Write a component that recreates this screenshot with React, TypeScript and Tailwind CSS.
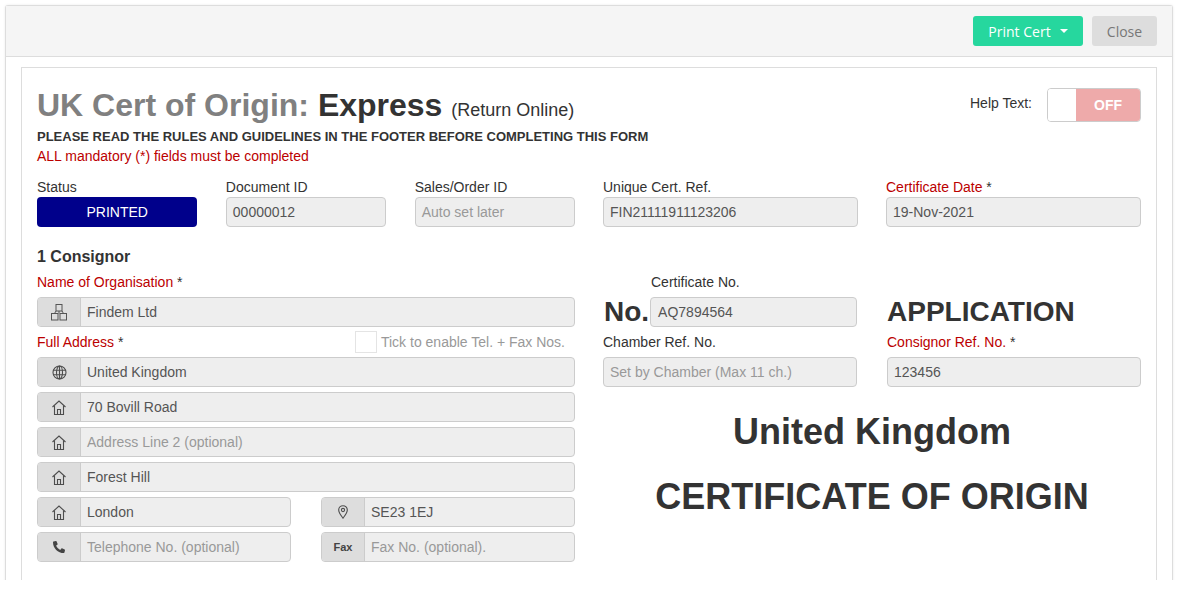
import { FaPhoneAlt } from 'react-icons/fa';
import { ReactNode } from 'react';

const red = 'text-[#bb0000]';

function NetworkIcon() {
  return (
    <svg width="16" height="17" viewBox="0 0 16 17" fill="none" stroke="#555" strokeWidth="1">
      <rect x="5" y="0.5" width="6" height="6.5" />
      <path d="M8 7v2.5M5 7L3.5 9.5M11 7l1.5 2.5" />
      <rect x="0.5" y="9.5" width="6.5" height="6.5" />
      <rect x="9" y="9.5" width="6.5" height="6.5" />
    </svg>
  );
}

function GlobeIcon() {
  return (
    <svg width="15" height="15" viewBox="0 0 15 15" fill="none" stroke="#4d4d4d" strokeWidth="1.1">
      <circle cx="7.5" cy="7.5" r="6.5" />
      <ellipse cx="7.5" cy="7.5" rx="3" ry="6.5" />
      <path d="M1 5.2h13M1 9.8h13M7.5 1v13" />
    </svg>
  );
}

function HouseIcon() {
  return (
    <svg width="14" height="15" viewBox="0 0 14 15" fill="none" stroke="#4d4d4d" strokeWidth="1.1">
      <path d="M0.5 7L7 1l6.5 6" />
      <path d="M2.5 5.5v9h9v-9" />
      <path d="M5.5 14.5V9.5h3v5" />
    </svg>
  );
}

function PinIcon() {
  return (
    <svg width="10" height="14" viewBox="0 0 10 14" fill="none" stroke="#4d4d4d" strokeWidth="1.1">
      <path d="M5 13.2C3 10.5 0.7 7.8 0.7 5a4.3 4.3 0 0 1 8.6 0c0 2.8-2.3 5.5-4.3 8.2z" />
      <circle cx="5" cy="5" r="1.6" />
    </svg>
  );
}

function Label({ children, mandatory }: { children: ReactNode; mandatory?: boolean }) {
  return (
    <div className="h-5 leading-5 text-[14px]">
      <span className={mandatory ? red : ''}>{children}</span>
      {mandatory && ' *'}
    </div>
  );
}

function Field({ value, placeholder, className = '' }: { value?: string; placeholder?: string; className?: string }) {
  return (
    <div
      className={`h-[30px] px-[6px] flex items-center bg-[#eeeeee] border border-[#cccccc] rounded-[4px] text-[14px] ${
        value ? 'text-[#555555]' : 'text-[#999999]'
      } ${className}`}
    >
      {value ?? placeholder}
    </div>
  );
}

function IconField({ icon, value, placeholder }: { icon: ReactNode; value?: string; placeholder?: string }) {
  return (
    <div className="flex h-[30px] bg-[#eeeeee] border border-[#cccccc] rounded-[4px] text-[14px]">
      <div className="w-[43px] shrink-0 flex items-center justify-center bg-[#dddddd] border-r border-[#cccccc] rounded-l-[3px]">
        {icon}
      </div>
      <div className={`px-[6px] flex items-center ${value ? 'text-[#555555]' : 'text-[#999999]'}`}>
        {value ?? placeholder}
      </div>
    </div>
  );
}

export default function App() {
  return (
    <div className="h-[580px] overflow-hidden bg-white pt-[5px] pl-[5px] pr-[4px] text-[#333333] font-['Liberation_Sans',Arial,sans-serif]">
      <div className="border border-b-0 border-[#dddddd] rounded-t-[3px] h-[600px] shadow-[0_0_3px_rgba(0,0,0,0.08)]">
        <div className="h-[51px] bg-[#f5f5f5] border-b border-[#dddddd] flex items-center justify-end gap-[9px] pr-[15px]">
          <button className="h-[30px] w-[110px] flex items-center justify-center gap-[9px] rounded-[3px] bg-[#26d79e] text-white text-[14px] font-['Open_Sans',sans-serif]">
            Print Cert
            <span className="border-x-[4px] border-x-transparent border-t-[4px] border-t-white" />
          </button>
          <button className="h-[30px] w-[65px] rounded-[3px] bg-[#dddddd] text-[#777777] text-[14px] font-['Open_Sans',sans-serif]">
            Close
          </button>
        </div>

        <div className="mt-[10px] mx-[15px] border border-[#dddddd] px-[15px] pt-[20px] h-[600px]">
          <div className="flex justify-between items-start h-[35px]">
            <div className="whitespace-nowrap leading-[35px]">
              <span className="text-[32px] font-bold text-[#808080]">UK Cert of Origin: </span>
              <span className="text-[32px] font-bold">Express </span>
              <span className="text-[18px]">(Return Online)</span>
            </div>
            <div className="flex items-start gap-[15px]">
              <span className="text-[14px] leading-5 mt-[5px]">Help Text:</span>
              <div className="flex w-[94px] h-[34px] border border-[#cccccc] rounded-[4px] overflow-hidden">
                <div className="w-[28px] bg-white" />
                <div className="flex-1 bg-[#eeaaaa] text-white text-[14px] font-bold flex items-center justify-center">
                  OFF
                </div>
              </div>
            </div>
          </div>

          <div className="mt-[4px] h-5 leading-5 text-[13px] font-bold whitespace-nowrap">
            PLEASE READ THE RULES AND GUIDELINES IN THE FOOTER BEFORE COMPLETING THIS FORM
          </div>
          <div className={`-mt-[1px] h-5 leading-5 text-[14px] ${red}`}>ALL mandatory (*) fields must be completed</div>

          <div className="mt-[11px] grid grid-cols-2 gap-x-[28px]">
            <div className="grid grid-cols-3 gap-x-[28.5px]">
              <div>
                <Label>Status</Label>
                <div className="h-[30px] flex items-center justify-center rounded-[4px] bg-[#00008b] text-white text-[14px]">
                  PRINTED
                </div>
              </div>
              <div>
                <Label>Document ID</Label>
                <Field value="00000012" />
              </div>
              <div>
                <Label>Sales/Order ID</Label>
                <Field placeholder="Auto set later" />
              </div>
            </div>
            <div className="grid grid-cols-2 gap-x-[28px]">
              <div>
                <Label>Unique Cert. Ref.</Label>
                <Field value="FIN21111911123206" />
              </div>
              <div>
                <Label mandatory>Certificate Date</Label>
                <Field value="19-Nov-2021" />
              </div>
            </div>
          </div>

          <div className="mt-[20px] h-5 leading-5 text-[16px] font-bold">1 Consignor</div>

          <div className="mt-[5px] grid grid-cols-2 gap-x-[28px]">
            <div>
              <div className="mb-[5px]">
                <Label mandatory>Name of Organisation</Label>
              </div>
              <IconField icon={<NetworkIcon />} value="Findem Ltd" />

              <div className="mt-[5px] mb-[5px] h-5 flex justify-between">
                <Label mandatory>Full Address</Label>
                <div className="flex items-center gap-[4px] pr-[10px] text-[14px] text-[#999999]">
                  <span className="w-[22px] h-[22px] border border-[#e4e4e4]" />
                  Tick to enable Tel. + Fax Nos.
                </div>
              </div>

              <div className="flex flex-col gap-[5px]">
                <IconField icon={<GlobeIcon />} value="United Kingdom" />
                <IconField icon={<HouseIcon />} value="70 Bovill Road" />
                <IconField icon={<HouseIcon />} placeholder="Address Line 2 (optional)" />
                <IconField icon={<HouseIcon />} value="Forest Hill" />
                <div className="grid grid-cols-2 gap-x-[30px]">
                  <IconField icon={<HouseIcon />} value="London" />
                  <IconField icon={<PinIcon />} value="SE23 1EJ" />
                </div>
                <div className="grid grid-cols-2 gap-x-[30px]">
                  <IconField icon={<FaPhoneAlt size={12} color="#444" />} placeholder="Telephone No. (optional)" />
                  <IconField icon={<span className="text-[11px] font-bold text-[#444444]">Fax</span>} placeholder="Fax No. (optional)." />
                </div>
              </div>
            </div>

            <div>
              <div className="grid grid-cols-2 gap-x-[30px]">
                <div>
                  <div className="pl-[48px] mb-[5px]">
                    <Label>Certificate No.</Label>
                  </div>
                  <div className="flex items-center gap-[1px] h-[30px]">
                    <span className="text-[28px] font-bold leading-[30px] pl-[1px]">No.</span>
                    <Field value="AQ7894564" className="flex-1 px-[7px]" />
                  </div>
                </div>
                <div className="pt-[25px]">
                  <div className="h-[30px] leading-[30px] text-[28px] font-bold">APPLICATION</div>
                </div>
              </div>

              <div className="mt-[5px] grid grid-cols-2 gap-x-[30px]">
                <div>
                  <div className="mb-[5px]">
                    <Label>Chamber Ref. No.</Label>
                  </div>
                  <Field placeholder="Set by Chamber (Max 11 ch.)" />
                </div>
                <div>
                  <div className="mb-[5px]">
                    <Label mandatory>Consignor Ref. No.</Label>
                  </div>
                  <Field value="123456" />
                </div>
              </div>

              <div className="mt-[25px] text-center text-[36px] font-bold leading-[40px]">United Kingdom</div>
              <div className="mt-[25px] text-center text-[36px] font-bold leading-[40px]">CERTIFICATE OF ORIGIN</div>
            </div>
          </div>
        </div>
      </div>
    </div>
  );
}
